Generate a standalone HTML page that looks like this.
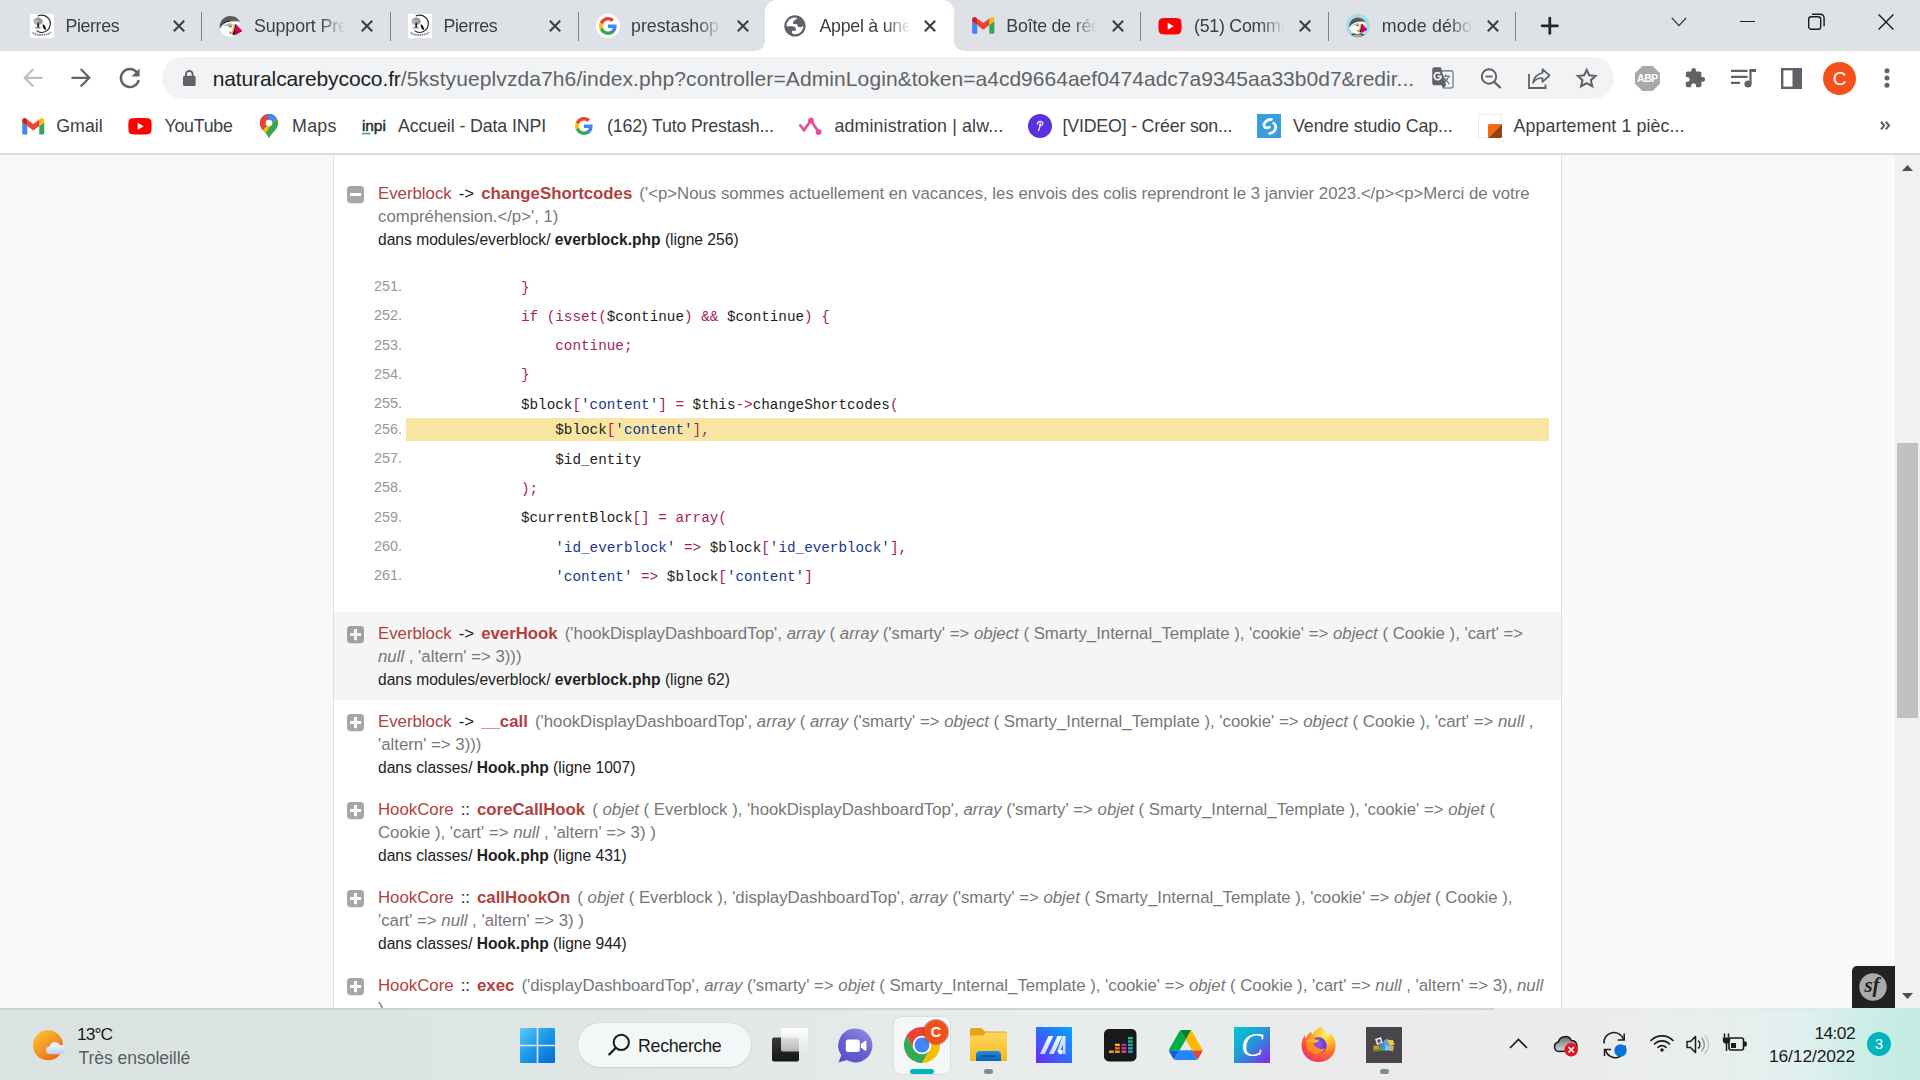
<!DOCTYPE html>
<html lang="fr">
<head>
<meta charset="utf-8">
<title>Appel à une fonction</title>
<style>
*{box-sizing:border-box;margin:0;padding:0}
html,body{width:1920px;height:1080px;overflow:hidden;background:#fff}
body{font-family:"Liberation Sans",sans-serif;position:relative;color:#222}
.abs{position:absolute}
svg{display:block;overflow:visible}

/* ---------- tab strip ---------- */
#tabstrip{position:absolute;left:0;top:0;width:1920px;height:51px;background:#dee1e6}
#atab{position:absolute;left:753px;top:0;width:213px;height:51px}
.tt_{position:absolute;top:12.500px;height:26px;line-height:26px;width:92px;overflow:hidden;white-space:nowrap;font-size:17.8px;color:#3c4043;letter-spacing:-.42px;-webkit-mask-image:linear-gradient(to right,#000 66px,transparent 91px);mask-image:linear-gradient(to right,#000 66px,transparent 91px)}
.sep{position:absolute;top:12px;width:1.200px;height:29px;background:#7f8286}
/* ---------- toolbar ---------- */
#toolbar{position:absolute;left:0;top:51px;width:1920px;height:52px;background:#fff}
#omni{position:absolute;left:162px;top:6px;width:1452px;height:42px;border-radius:21px;background:#f1f3f4}
#url{position:absolute;left:212.700px;top:13.300px;height:30px;line-height:30px;font-size:21px;white-space:nowrap;color:#5f6368;letter-spacing:.1px}
#url b{font-weight:normal;color:#202124;letter-spacing:-.11px}
#url i{font-style:normal;letter-spacing:.018px}
/* ---------- bookmarks ---------- */
#bookmarks{position:absolute;left:0;top:103px;width:1920px;height:50px;background:#fff}
#bmline{position:absolute;left:0;top:153px;width:1920px;height:2px;background:#d9dbde}
.bm{position:absolute;top:10px;height:26px;line-height:26px;font-size:17.8px;color:#3c4043;white-space:nowrap;letter-spacing:-.42px}

/* ---------- page ---------- */
#page{position:absolute;left:0;top:155px;width:1895px;height:853px;background:#f9f9f9;overflow:hidden;font-size:16.8px;line-height:23px}
#container{position:absolute;left:333px;top:-42px;width:1229px;height:1000px;background:#fff;border:1px solid #e0e0e0}
.tl{position:absolute;left:0;width:1227px;padding:10px 0 9px 0}
.tl.hov{background:#f5f5f5}
.tl .ic{position:absolute;left:13px;top:14px;width:17px;height:17.200px}
.th{padding-left:44px;padding-right:12px;white-space:nowrap}
.th .l{display:block;height:23px;line-height:23px}
.tc{color:#b0413e}
.tt{padding:0 2.4px}
.tm{color:#b0413e;font-weight:bold}
.ta{color:#777;padding-left:2.4px}
.ta em{font-style:italic}
.tf{color:#222;font-size:15.6px}
.tf b{font-weight:bold}
.code{position:absolute;left:72px;top:103px;width:1143px}
.code .li{position:relative;height:23.3px;margin-top:6px;line-height:23.3px;white-space:pre;font-family:"Liberation Mono",monospace;font-size:14.3px;color:#222}
.code .li:first-child{margin-top:0}
.code .li.sel{background:#f7e5a1;margin-top:2.4px}
.code .li i{position:absolute;left:-40px;width:36px;text-align:right;font-style:normal;font-family:"Liberation Sans",sans-serif;font-size:14.4px;color:#969896}
.code .li code{font:inherit;padding-left:12px;position:relative;top:1.600px}
.k{color:#a71d5d}.s{color:#183691}
#sfbtn{position:absolute;left:1852px;top:811px;width:43px;height:42px;background:#222;border-top-left-radius:5px}
#sfbtn svg{position:absolute;left:7px;top:7.200px;width:28px;height:28px}
/* ---------- scrollbar ---------- */
#scroll{position:absolute;left:1895px;top:155px;width:25px;height:853px;background:#f1f1f1}
#scroll .thumb{position:absolute;left:2px;top:288px;width:21px;height:275px;background:#c1c1c1}
#scroll svg{position:absolute;left:7px;width:11px;height:6px}

/* ---------- taskbar ---------- */
#taskbar{position:absolute;left:0;top:1008px;width:1920px;height:72px;background:linear-gradient(to right,#dae3e1 0,#dce5e3 20%,#e2e8e8 40%,#e8ecec 53%,#eaeceb 75%,#ebedec 85%,#e6efee 91%,#e0f0ef 94%,#cdeee6 97%,#c2ebe1 100%)}
#tbline{position:absolute;left:0;top:0;width:1920px;height:2px;background:linear-gradient(to right,#c8d2d0 0,#ccd4d3 40%,#d0d4d3 1494px,#e8ecec 1494px,#e9eceb 1700px,#d6ede8 1860px,#c9ebe3 1920px)}
#tbin{position:absolute;left:0;top:1px;width:1920px;height:71px}
#taskbar .t{position:absolute;white-space:nowrap;font-size:17.6px;line-height:22px;color:#1b1b1b;letter-spacing:-.35px}
</style>
</head>
<body>
<div id="tabstrip">
<svg id="atab" viewBox="0 0 213 51"><path fill="#fff" d="M2 51A10 10 0 0 0 12 41V12C12 5.400 17.400 0 24 0H189C195.600 0 201 5.400 201 12V41A10 10 0 0 0 211 51z"/></svg>
<svg class="abs" style="left:30px;top:14px;width:24px;height:24px" viewBox="0 0 24 24" ><rect width="24" height="24" fill="#fff"/><path d="M9 1.6A8.6 8.6 0 1 1 6.5 16.6" fill="none" stroke="#222" stroke-width="1.1"/><circle cx="8.4" cy="1.8" r=".7" fill="#111"/><ellipse cx="8.2" cy="7.3" rx="4.6" ry="3.7" fill="#9a9a9a"/><ellipse cx="6.6" cy="7.8" rx="2.6" ry="2.4" fill="#b5b5b5"/><path d="M7.5 8.5h1.4l.3 4.2 1 .8H6.1l1.1-.8z" fill="#222"/><path d="M4.2 13.4h7.2l-1.2 1.1H5.6z" fill="#777"/><path d="M12.6 10.2c1.8.4 3.3 2.6 3.6 5.3l-1.2.4c-1.6-1.3-2.7-3.5-2.4-5.7z" fill="#111"/><path d="M2.6 18.6c3 2.8 14.5 3 18.6-.4" fill="none" stroke="#777" stroke-width="1.3" stroke-dasharray="1.6 .7"/><path d="M3.5 20.5c4 1.6 12 1.6 16.5-.8" fill="none" stroke="#999" stroke-width=".9" stroke-dasharray="1.2 .9"/></svg>
<div class="tt_" style="left:65.4px;letter-spacing:-0.35px">Pierres</div>
<svg class="abs" style="left:172.6px;top:19.7px;width:12px;height:12px" viewBox="0 0 12 12" ><path d="M.8.800l10.400 10.400M11.200.800L.8 11.200" stroke="#3c4043" stroke-width="2.100" fill="none"/></svg>
<div class="sep" style="left:201.3px"></div>
<svg class="abs" style="left:219px;top:14px;width:24px;height:24px" viewBox="0 0 24 24" ><g transform="translate(11.4 12.4) scale(1.0)"><circle cx="-0.5" cy="0" r="10.4" fill="#fff"/><path d="M-10.6 2.6C-12 -6 -5 -10.6 0 -10.3c4.6.2 8.4 2.6 9.6 6.2C5 -7 -5 -7.6 -10.6 2.6z" fill="#595959"/><path d="M-8.2 -1.4C-5 -6.6 3 -7 7 -4.4 2 -6 -4 -5 -8.2 -1.4z" fill="#1f1f1f"/><path d="M-7.4 -.4C-3 -4 1 -3.6 2.6 -2.2L1 1 -3.5 -.6z" fill="#b8b8b8"/><path d="M-2.6 -.6L1.2 .2 .6 1z" fill="#222"/><path d="M5.6 -3.6a2.6 2.6 0 0 1 3.6 2.4L6 -1.2z" fill="#fff"/><path d="M3.4 -2.6C2.6 1 2.2 4 .4 7.4l1.4.6C3.6 4.4 4.4 1 4.6 -2.2z" fill="#f6b21b"/><path d="M4.6 -2.2C4.4 1 3.6 4.4 1.8 8l2.4 .8L6 -1z" fill="#1b1b1b"/><path d="M-1.8 4.6L1 6.6l-.6 1z" fill="#333"/><path d="M5.4 -2.6L12 4.6 4.2 8.8z" fill="#df0067"/><path d="M4.9 3L12 4.6 4.2 8.8z" fill="#c2005b"/></g></svg>
<div class="tt_" style="left:254px;letter-spacing:-0.1px">Support PrestaShop</div>
<svg class="abs" style="left:361px;top:19.7px;width:12px;height:12px" viewBox="0 0 12 12" ><path d="M.8.800l10.400 10.400M11.200.800L.8 11.200" stroke="#3c4043" stroke-width="2.100" fill="none"/></svg>
<div class="sep" style="left:390.3px"></div>
<svg class="abs" style="left:407.7px;top:14px;width:24px;height:24px" viewBox="0 0 24 24" ><rect width="24" height="24" fill="#fff"/><path d="M9 1.6A8.6 8.6 0 1 1 6.5 16.6" fill="none" stroke="#222" stroke-width="1.1"/><circle cx="8.4" cy="1.8" r=".7" fill="#111"/><ellipse cx="8.2" cy="7.3" rx="4.6" ry="3.7" fill="#9a9a9a"/><ellipse cx="6.6" cy="7.8" rx="2.6" ry="2.4" fill="#b5b5b5"/><path d="M7.5 8.5h1.4l.3 4.2 1 .8H6.1l1.1-.8z" fill="#222"/><path d="M4.2 13.4h7.2l-1.2 1.1H5.6z" fill="#777"/><path d="M12.6 10.2c1.8.4 3.3 2.6 3.6 5.3l-1.2.4c-1.6-1.3-2.7-3.5-2.4-5.7z" fill="#111"/><path d="M2.6 18.6c3 2.8 14.5 3 18.6-.4" fill="none" stroke="#777" stroke-width="1.3" stroke-dasharray="1.6 .7"/><path d="M3.5 20.5c4 1.6 12 1.6 16.5-.8" fill="none" stroke="#999" stroke-width=".9" stroke-dasharray="1.2 .9"/></svg>
<div class="tt_" style="left:443.5px;letter-spacing:-0.35px">Pierres</div>
<svg class="abs" style="left:549px;top:19.7px;width:12px;height:12px" viewBox="0 0 12 12" ><path d="M.8.800l10.400 10.400M11.200.800L.8 11.200" stroke="#3c4043" stroke-width="2.100" fill="none"/></svg>
<div class="sep" style="left:578.3px"></div>
<svg class="abs" style="left:596px;top:14px;width:24px;height:24px" viewBox="0 0 24 24" ><circle cx="12" cy="12" r="12" fill="#fff"/><g transform="translate(3 3) scale(.75)"><path fill="#4285F4" d="M23.49 12.27c0-.79-.07-1.54-.19-2.27H12v4.51h6.47c-.29 1.48-1.14 2.73-2.4 3.58v3h3.86c2.26-2.09 3.56-5.17 3.56-8.82z"/><path fill="#34A853" d="M12 24c3.24 0 5.95-1.08 7.93-2.91l-3.86-3c-1.08.72-2.45 1.16-4.07 1.16-3.13 0-5.78-2.11-6.73-4.96H1.29v3.09C3.26 21.3 7.31 24 12 24z"/><path fill="#FBBC05" d="M5.27 14.29c-.25-.72-.38-1.49-.38-2.29s.14-1.57.38-2.29V6.62H1.29C.47 8.24 0 10.06 0 12s.47 3.76 1.29 5.38l3.98-3.09z"/><path fill="#EA4335" d="M12 4.75c1.77 0 3.35.61 4.6 1.8l3.42-3.42C17.95 1.19 15.24 0 12 0 7.31 0 3.26 2.7 1.29 6.62l3.98 3.09c.95-2.85 3.6-4.96 6.73-4.96z"/></g></svg>
<div class="tt_" style="left:631px;letter-spacing:0px">prestashop - Recherche</div>
<svg class="abs" style="left:737px;top:19.7px;width:12px;height:12px" viewBox="0 0 12 12" ><path d="M.8.800l10.400 10.400M11.200.800L.8 11.200" stroke="#3c4043" stroke-width="2.100" fill="none"/></svg>
<svg class="abs" style="left:778px;top:9px;width:34px;height:34px" viewBox="0 0 34 34" ><clipPath id="gc"><circle cx="16.950" cy="16.920" r="9.800"/></clipPath><circle cx="16.950" cy="16.920" r="9.550" fill="none" stroke="#5f6368" stroke-width="2.200"/><g clip-path="url(#gc)"><path d="M18.900 7.500L18.700 10.200C16.600 10.900 15.100 12.100 15.100 13.600V14.900H18.300C18.900 14.900 19 15.300 19.100 15.800 19.400 17.300 20.500 18.300 22 18.300 23.300 18.300 24.400 17.700 25.200 16.800L29 17V5H18.900z" fill="#5f6368"/><path d="M5 17.200H14.200C16.300 17.200 17.900 18.300 17.900 20V21.800H15.200C14.300 21.800 13.900 22.300 13.900 23.200 13.900 24 14.300 24.600 15 25L15.500 29H5z" fill="#5f6368"/></g></svg>
<div class="tt_" style="left:819.4px;letter-spacing:-0.25px">Appel à une fonction</div>
<svg class="abs" style="left:924.2px;top:19.7px;width:12px;height:12px" viewBox="0 0 12 12" ><path d="M.8.800l10.400 10.400M11.200.800L.8 11.200" stroke="#3c4043" stroke-width="2.100" fill="none"/></svg>
<svg class="abs" style="left:972px;top:17.3px;width:22.5px;height:16.7px" viewBox="0 0 24 18" ><path fill="#4285f4" d="M1.64 18h3.82V8.73L0 4.64v11.72C0 17.27.73 18 1.64 18z"/><path fill="#34a853" d="M18.55 18h3.82c.9 0 1.63-.73 1.63-1.64V4.64l-5.45 4.09z"/><path fill="#fbbc04" d="M18.55 1.64v7.09L24 4.64V2.45C24 .43 21.69-.72 20.07.49z"/><path fill="#ea4335" d="M5.45 8.73V1.64L12 6.55l6.55-4.91v7.09L12 13.64z"/><path fill="#c5221f" d="M0 2.45v2.19l5.45 4.09V1.64L3.93.49C2.31-.72 0 .43 0 2.45z"/></svg>
<div class="tt_" style="left:1006.3px;letter-spacing:-0.2px">Boîte de réception</div>
<svg class="abs" style="left:1111.5px;top:19.7px;width:12px;height:12px" viewBox="0 0 12 12" ><path d="M.8.800l10.400 10.400M11.200.800L.8 11.200" stroke="#3c4043" stroke-width="2.100" fill="none"/></svg>
<div class="sep" style="left:1140.3px"></div>
<svg class="abs" style="left:1158px;top:17.7px;width:24px;height:16.4px" viewBox="0 0 24 17" ><path fill="#f00" d="M23.5 2.65A3.02 3.02 0 0 0 21.38.52C19.5 0 12 0 12 0S4.5 0 2.62.52A3.02 3.02 0 0 0 .5 2.65C0 4.54 0 8.5 0 8.5s0 3.96.5 5.85a3.02 3.02 0 0 0 2.12 2.13C4.5 17 12 17 12 17s7.5 0 9.38-.52a3.02 3.02 0 0 0 2.12-2.13c.5-1.89.5-5.85.5-5.85s0-3.960-.5-5.85z"/><path fill="#fff" d="M9.6 12.1V4.9l6.2 3.6z"/></svg>
<div class="tt_" style="left:1194px;letter-spacing:-0.25px">(51) Comment</div>
<svg class="abs" style="left:1299px;top:19.7px;width:12px;height:12px" viewBox="0 0 12 12" ><path d="M.8.800l10.400 10.400M11.200.800L.8 11.200" stroke="#3c4043" stroke-width="2.100" fill="none"/></svg>
<div class="sep" style="left:1328.3px"></div>
<svg class="abs" style="left:1346px;top:14px;width:24px;height:24px" viewBox="0 0 24 24" ><circle cx="12" cy="12" r="12" fill="#a6dcea"/><clipPath id="c8"><circle cx="12" cy="12" r="10.800"/></clipPath><g clip-path="url(#c8)"><ellipse cx="11.500" cy="22.500" rx="8" ry="3.600" fill="#3f3f3f"/><ellipse cx="11.500" cy="23.300" rx="6.200" ry="3" fill="#c4a77a"/><g transform="translate(11.8 11.7) scale(0.8)"><circle cx="-0.5" cy="0" r="10.4" fill="#fff"/><path d="M-10.6 2.6C-12 -6 -5 -10.6 0 -10.3c4.6.2 8.4 2.6 9.6 6.2C5 -7 -5 -7.6 -10.6 2.6z" fill="#595959"/><path d="M-8.2 -1.4C-5 -6.6 3 -7 7 -4.4 2 -6 -4 -5 -8.2 -1.4z" fill="#1f1f1f"/><path d="M-7.4 -.4C-3 -4 1 -3.6 2.6 -2.2L1 1 -3.5 -.6z" fill="#b8b8b8"/><path d="M-2.6 -.6L1.2 .2 .6 1z" fill="#222"/><path d="M5.6 -3.6a2.6 2.6 0 0 1 3.6 2.4L6 -1.2z" fill="#fff"/><path d="M3.4 -2.6C2.6 1 2.2 4 .4 7.4l1.4.6C3.6 4.4 4.4 1 4.6 -2.2z" fill="#f6b21b"/><path d="M4.6 -2.2C4.4 1 3.6 4.4 1.8 8l2.4 .8L6 -1z" fill="#1b1b1b"/><path d="M-1.8 4.6L1 6.6l-.6 1z" fill="#333"/><path d="M5.4 -2.6L12 4.6 4.2 8.8z" fill="#df0067"/><path d="M4.9 3L12 4.6 4.2 8.8z" fill="#c2005b"/></g></g></svg>
<div class="tt_" style="left:1381.8px;letter-spacing:0.15px">mode débogage</div>
<svg class="abs" style="left:1487px;top:19.7px;width:12px;height:12px" viewBox="0 0 12 12" ><path d="M.8.800l10.400 10.400M11.200.800L.8 11.200" stroke="#3c4043" stroke-width="2.100" fill="none"/></svg>
<div class="sep" style="left:1515.3px"></div>
<svg class="abs" style="left:1540.7px;top:16.7px;width:17.6px;height:17.6px" viewBox="0 0 19 19" ><path d="M9.500 1.200v16.600M1.200 9.500h16.600" stroke="#24272a" stroke-width="3" stroke-linecap="round"/></svg>
<svg class="abs" style="left:1671px;top:17px;width:16px;height:10px" viewBox="0 0 16 10" ><path d="M.8.800L8 8.600 15.200.800" stroke="#2a2a2a" stroke-width="1.150" fill="none"/></svg>
<div class="abs" style="left:1740px;top:20.800px;width:15px;height:1.400px;background:#1c1c1c"></div>
<svg class="abs" style="left:1808px;top:13px;width:17px;height:17px" viewBox="0 0 17 17" ><rect x=".7" y="3.700" width="12" height="12.600" rx="2.600" fill="none" stroke="#1c1c1c" stroke-width="1.400"/><path d="M4 1.200h8.500a3.600 3.600 0 0 1 3.600 3.600v8.400" fill="none" stroke="#1c1c1c" stroke-width="1.400"/></svg>
<svg class="abs" style="left:1878px;top:14px;width:16px;height:16px" viewBox="0 0 16 16" ><path d="M.6.600l14.800 14.800M15.400.600L.6 15.400" stroke="#1c1c1c" stroke-width="1.400"/></svg>
</div>
<div id="toolbar"><div id="omni"></div>
<svg class="abs" style="left:23px;top:16.700000000000003px;width:20px;height:19.6px" viewBox="0 0 20 19.600" ><path d="M19.500 9.800H2.500M10.300 1.100L1.700 9.800 10.300 18.500" fill="none" stroke="#bbbdc1" stroke-width="2.200"/></svg>
<svg class="abs" style="left:71px;top:16.700000000000003px;width:20px;height:19.6px" viewBox="0 0 20 19.600" ><path d="M.5 9.800H17.500M9.700 1.100L18.300 9.800 9.700 18.500" fill="none" stroke="#5f6368" stroke-width="2.200"/></svg>
<svg class="abs" style="left:118.7px;top:15.700000000000003px;width:21.8px;height:21.8px" viewBox="0 0 21 21" ><path d="M17.300 5.200A8.700 8.700 0 1 0 19 12.500" fill="none" stroke="#5f6368" stroke-width="2.300"/><path d="M19.800 1.500v7.700h-7.700z" fill="#5f6368"/></svg>
<svg class="abs" style="left:182.7px;top:19.299999999999997px;width:12.6px;height:16.5px" viewBox="0 0 13 17" ><rect x="0" y="6" width="13" height="10.500" rx="1.600" fill="#5f6368"/><path d="M3 6.500V4.500a3.500 3.500 0 0 1 7 0v2" fill="none" stroke="#5f6368" stroke-width="1.900"/></svg>
<svg class="abs" style="left:1430.3px;top:14.200000000000003px;width:25.8px;height:25.6px" viewBox="0 0 24 24" ><path fill="#5f6368" d="M20 5h-9.120L10 2H4c-1.100 0-2 .9-2 2v13c0 1.100.9 2 2 2h7l1 3h8c1.100 0 2-.9 2-2V7c0-1.100-.9-2-2-2zM7.170 14.590c-2.250 0-4.090-1.830-4.090-4.090s1.830-4.090 4.090-4.090c1.040 0 1.990.370 2.740 1.070l.070.060-1.230 1.180-.060-.050c-.290-.270-.780-.590-1.520-.590-1.310 0-2.380 1.090-2.380 2.420s1.070 2.420 2.380 2.420c1.370 0 1.960-.870 2.120-1.460H7.080V9.910h3.950l.010.070c.040.210.050.4.050.610 0 2.350-1.610 4-3.920 4zm6.030-1.710c.330.600.740 1.180 1.190 1.700l-.540.530-.650-2.230zm.77-.760h-.990l-.310-1.040h3.990s-.340 1.310-1.560 2.740c-.520-.620-.890-1.230-1.130-1.700zM21 20c0 .550-.450 1-1 1h-7l2-2-.810-2.770.920-.920L17.790 18l.730-.730-2.710-2.680c.9-1.030 1.600-2.250 1.920-3.510H19v-1.040h-3.640V9h-1.040v1.040h-1.960L11.180 6H20c.550 0 1 .450 1 1v13z"/></svg>
<svg class="abs" style="left:1480px;top:16.5px;width:22px;height:21px" viewBox="0 0 22 21" ><circle cx="9" cy="8.500" r="7.200" fill="none" stroke="#5f6368" stroke-width="2"/><path d="M14.200 13.800L20.600 20" stroke="#5f6368" stroke-width="2.300"/><path d="M5.500 8.500h7" stroke="#5f6368" stroke-width="1.800"/></svg>
<svg class="abs" style="left:1528px;top:16.5px;width:23px;height:21px" viewBox="0 0 23 21" ><path d="M1 6v14h16.500v-3.500" fill="none" stroke="#5f6368" stroke-width="1.800"/><path d="M14.500 1.200l7 6.300-7 6.300V10c-4.500 0-7.500 1.500-9.500 4.800C6 9.500 9 6 14.500 5z" fill="none" stroke="#5f6368" stroke-width="1.700" stroke-linejoin="round"/></svg>
<svg class="abs" style="left:1576.3px;top:16.400000000000006px;width:21.4px;height:20.4px" viewBox="0 0 22 21" ><path d="M11 2.900l2.600 5.600 6.500.7-4.800 4.400 1.400 6.200L11 16.600 5.300 19.800l1.400-6.200L1.900 9.200l6.500-.7z" fill="none" stroke="#5f6368" stroke-width="2.100" stroke-linejoin="miter"/></svg>
<svg class="abs" style="left:1634.5px;top:14.5px;width:25px;height:25px" viewBox="0 0 25 25" ><path d="M7.300 0h10.400L25 7.300v10.400L17.700 25H7.300L0 17.700V7.300z" fill="#a9a9a9"/><text x="12.500" y="16.400" text-anchor="middle" font-family="Liberation Sans,sans-serif" font-weight="bold" font-size="10.500" letter-spacing="-.4" fill="#fff">ABP</text></svg>
<svg class="abs" style="left:1684px;top:16px;width:22px;height:22px" viewBox="0 0 24 24" ><path fill="#5f6368" d="M20.500 11H19V7c0-1.100-.9-2-2-2h-4V3.500a2.500 2.500 0 0 0-5 0V5H4c-1.100 0-1.990.900-1.990 2v3.800H3.500c1.490 0 2.700 1.210 2.700 2.700s-1.210 2.700-2.700 2.700H2V20c0 1.100.9 2 2 2h3.800v-1.500c0-1.490 1.210-2.700 2.700-2.700s2.700 1.210 2.700 2.700V22H17c1.100 0 2-.9 2-2v-4h1.500a2.500 2.500 0 0 0 0-5z"/></svg>
<svg class="abs" style="left:1730.5px;top:17.5px;width:25px;height:19px" viewBox="0 0 25 19" ><path d="M0 1.800h16.500M0 7.800h16.500M0 13.800h9" stroke="#5f6368" stroke-width="2.200"/><path d="M19.500 1v13.500" stroke="#5f6368" stroke-width="2.200"/><path d="M18.400 0H25v3h-6.600z" fill="#5f6368"/><circle cx="17" cy="15" r="3.600" fill="#5f6368"/></svg>
<svg class="abs" style="left:1780.5px;top:16.5px;width:21px;height:21px" viewBox="0 0 21 21" ><rect x="1.200" y="1.200" width="18.600" height="18.600" fill="none" stroke="#5f6368" stroke-width="2.400"/><rect x="11.500" y="1" width="9" height="19" fill="#5f6368"/></svg>
<div class="abs" style="left:1823px;top:10.500px;width:33px;height:33px;border-radius:50%;background:#f4511e;color:#fff;font-size:19px;line-height:33px;text-align:center">C</div>
<svg class="abs" style="left:1884px;top:17px;width:6px;height:20px" viewBox="0 0 6 20" ><circle cx="3" cy="2.700" r="2.500" fill="#5f6368"/><circle cx="3" cy="10" r="2.500" fill="#5f6368"/><circle cx="3" cy="17.300" r="2.500" fill="#5f6368"/></svg>
<div id="url"><b>naturalcarebycoco.fr</b>/5kstyueplvzda7h6/index.php?controller=AdminLogin<i>&amp;token=a4cd9664aef0474adc7a9345aa33b0d7&amp;redir...</i></div>
</div>
<div id="bookmarks">
<svg class="abs" style="left:22px;top:15px;width:22.5px;height:16.5px" viewBox="0 0 24 18" ><path fill="#4285f4" d="M1.64 18h3.82V8.73L0 4.64v11.72C0 17.27.73 18 1.64 18z"/><path fill="#34a853" d="M18.55 18h3.82c.9 0 1.63-.73 1.63-1.64V4.64l-5.45 4.09z"/><path fill="#fbbc04" d="M18.55 1.64v7.09L24 4.64V2.45C24 .43 21.69-.72 20.07.49z"/><path fill="#ea4335" d="M5.45 8.73V1.64L12 6.55l6.55-4.91v7.09L12 13.64z"/><path fill="#c5221f" d="M0 2.45v2.19l5.45 4.09V1.64L3.93.49C2.31-.72 0 .43 0 2.45z"/></svg>
<div class="bm" style="left:56.3px;letter-spacing:-0.02px">Gmail</div>
<svg class="abs" style="left:128px;top:15px;width:24px;height:16.5px" viewBox="0 0 24 17" ><path fill="#f00" d="M23.5 2.65A3.02 3.02 0 0 0 21.38.52C19.5 0 12 0 12 0S4.5 0 2.62.52A3.02 3.02 0 0 0 .5 2.65C0 4.54 0 8.5 0 8.5s0 3.96.5 5.85a3.02 3.02 0 0 0 2.12 2.13C4.5 17 12 17 12 17s7.5 0 9.38-.52a3.02 3.02 0 0 0 2.12-2.13c.5-1.89.5-5.85.5-5.85s0-3.960-.5-5.85z"/><path fill="#fff" d="M9.6 12.1V4.9l6.2 3.6z"/></svg>
<div class="bm" style="left:164.5px;letter-spacing:-0.25px">YouTube</div>
<svg class="abs" style="left:260px;top:11px;width:18px;height:24px" viewBox="0 0 18 24" ><clipPath id="mp"><path d="M9 0C4 0 0 4 0 9c0 2.400.9 4.400 2.200 6.200C4.600 18.500 7.600 20.500 9 24c1.400-3.500 4.400-5.500 6.800-8.800C17.100 13.400 18 11.400 18 9c0-5-4-9-9-9z"/></clipPath><g clip-path="url(#mp)"><rect width="18" height="24" fill="#34a853"/><path d="M0 0h18L0 18z" fill="#1a73e8"/><path d="M0 0h9v9L0 18z" fill="#ea4335"/><path d="M0 9l9 0 0 0L0 20z" fill="#ea4335"/><path d="M18 0v11L7 24H0v-6z" fill="none"/><path d="M0 12.5L12.5 0H18v3L2.500 18.500z" fill="none"/><path d="M2 17L16.500 2.500l1.500 5L5 21z" fill="#fbbc04"/><path d="M6 0h12v3L12 9 9 6z" fill="#4285f4"/><path d="M11 10.500L18 3.500V14L9 24H8L6 19z" fill="#34a853"/></g><circle cx="9" cy="9" r="3.300" fill="#fff"/></svg>
<div class="bm" style="left:292px;letter-spacing:0.33px">Maps</div>
<svg class="abs" style="left:361.5px;top:14.5px;width:26px;height:17px" viewBox="0 0 26 17" ><text x="0" y="12.500" font-family="Liberation Sans,sans-serif" font-size="15.500" letter-spacing="-.1" fill="#1d2a3a" stroke="#1d2a3a" stroke-width=".45">inpi</text><rect x="0" y="14.800" width="8.500" height="1.500" fill="#2a9d9a"/></svg>
<div class="bm" style="left:398px;letter-spacing:-0.11px">Accueil - Data INPI</div>
<svg class="abs" style="left:575px;top:13.5px;width:18px;height:18px" viewBox="0 0 24 24" ><path fill="#4285F4" d="M23.49 12.27c0-.79-.07-1.54-.19-2.27H12v4.51h6.47c-.29 1.48-1.14 2.73-2.4 3.58v3h3.86c2.26-2.09 3.56-5.17 3.56-8.82z"/><path fill="#34A853" d="M12 24c3.24 0 5.95-1.08 7.93-2.91l-3.86-3c-1.08.72-2.45 1.16-4.07 1.16-3.13 0-5.78-2.11-6.73-4.96H1.29v3.09C3.26 21.3 7.31 24 12 24z"/><path fill="#FBBC05" d="M5.27 14.29c-.25-.72-.38-1.49-.38-2.29s.14-1.57.38-2.29V6.62H1.29C.47 8.24 0 10.06 0 12s.47 3.76 1.29 5.38l3.98-3.09z"/><path fill="#EA4335" d="M12 4.75c1.77 0 3.35.61 4.6 1.8l3.42-3.42C17.95 1.19 15.24 0 12 0 7.31 0 3.26 2.7 1.29 6.62l3.98 3.09c.95-2.85 3.6-4.96 6.73-4.96z"/></svg>
<div class="bm" style="left:607px;letter-spacing:-0.19px">(162) Tuto Prestash...</div>
<svg class="abs" style="left:798.5px;top:11px;width:24px;height:24px" viewBox="0 0 24 24" ><path d="M1.200 11.500L5 16 12 6.500 19.500 18" fill="none" stroke="#e84d9c" stroke-width="2.700" stroke-linejoin="round" stroke-linecap="round"/><circle cx="12" cy="6.400" r="2.900" fill="#e84d9c"/><circle cx="19.600" cy="18" r="2.900" fill="#e84d9c"/><circle cx="5" cy="16" r="1.600" fill="#e84d9c"/></svg>
<div class="bm" style="left:834.4px;letter-spacing:0.145px">administration | alw...</div>
<svg class="abs" style="left:1028px;top:11px;width:24px;height:24px" viewBox="0 0 24 24" ><circle cx="12" cy="12" r="12" fill="#5a31e0"/><path d="M10.500 16.500c1.200-2.500 1.800-5 1.800-7.500M9.400 10c.4-1.700 2-2.700 3.600-2.500 1.700.2 2.400 1.800 1.500 3-.7.900-1.900 1.200-3 .9" fill="none" stroke="#fff" stroke-width="1.200" stroke-linecap="round"/></svg>
<div class="bm" style="left:1062.5px;letter-spacing:-0.19px">[VIDEO] - Créer son...</div>
<svg class="abs" style="left:1257px;top:11px;width:24px;height:24px" viewBox="0 0 24 24" ><rect width="24" height="24" fill="#3a9ddc"/><path d="M14.600 5.400C10.500 4.800 5.800 9 7.300 12.300 8.300 14.300 10.600 14.400 12.300 13.200" fill="none" stroke="#fff" stroke-width="2.700" stroke-linecap="round"/><path d="M16.600 9.200C19.300 10.800 19.600 14.600 17 17.200 15.600 18.600 14 19.300 12.600 19.300" fill="none" stroke="#fff" stroke-width="2.700" stroke-linecap="round"/></svg>
<div class="bm" style="left:1293px;letter-spacing:-0.07px">Vendre studio Cap...</div>
<svg class="abs" style="left:1478px;top:11px;width:24px;height:24px" viewBox="0 0 24 24" ><rect x=".5" y=".5" width="23" height="23" fill="#fff" stroke="#ececec"/><path d="M10 11.500a1.500 1.500 0 0 1 1.500-1.500H24L10 24z" fill="#f96a0e"/><path d="M24 10v12.500a1.500 1.500 0 0 1-1.500 1.500H10z" fill="#96400c"/></svg>
<div class="bm" style="left:1513.5px;letter-spacing:0.1px">Appartement 1 pièc...</div>
<svg class="abs" style="left:1880.4px;top:18px;width:10px;height:9.2px" viewBox="0 0 10 9.200" ><path d="M1 .8L4.200 4.600 1 8.400M5.800 .8L9 4.600 5.800 8.400" fill="none" stroke="#5f6368" stroke-width="2.100"/></svg>
</div><div id="bmline"></div>
<div id="page"><div id="container">
<div class="tl" style="top:58px;height:440px"><svg class="ic" viewBox="0 0 17 17" preserveAspectRatio="none" opacity=".4"><path fill="#222" d="M3.600 0h9.800a3.600 3.600 0 0 1 3.600 3.600v9.800a3.600 3.600 0 0 1-3.600 3.600H3.600a3.600 3.600 0 0 1-3.600-3.600V3.600a3.600 3.600 0 0 1 3.600-3.600zm-.6 7v3h11V7z"/></svg><div class="th"><span class="l"><span class="tc">Everblock</span> <span class="tt">-&gt;</span> <span class="tm">changeShortcodes</span> <span class="ta">('&lt;p&gt;Nous sommes actuellement en vacances, les envois des colis reprendront le 3 janvier 2023.&lt;/p&gt;&lt;p&gt;Merci de votre</span></span><span class="l"><span class="ta" style="padding:0">compréhension.&lt;/p&gt;', 1)</span></span><span class="l"><span class="tf">dans modules/everblock/ <b>everblock.php</b> (ligne 256)</span></span></div><div class="code"><div class="li"><i>251.</i><code>            <span class="k">}</span></code></div><div class="li"><i>252.</i><code>            <span class="k">if (isset(</span>$continue<span class="k">) &amp;&amp; </span>$continue<span class="k">) {</span></code></div><div class="li"><i>253.</i><code>                <span class="k">continue;</span></code></div><div class="li"><i>254.</i><code>            <span class="k">}</span></code></div><div class="li"><i>255.</i><code>            $block<span class="k">[</span><span class="s">'content'</span><span class="k">] = </span>$this<span class="k">-&gt;</span>changeShortcodes<span class="k">(</span></code></div><div class="li sel"><i>256.</i><code>                $block<span class="k">[</span><span class="s">'content'</span><span class="k">],</span></code></div><div class="li"><i>257.</i><code>                $id_entity</code></div><div class="li"><i>258.</i><code>            <span class="k">);</span></code></div><div class="li"><i>259.</i><code>            $currentBlock<span class="k">[] = array(</span></code></div><div class="li"><i>260.</i><code>                <span class="s">'id_everblock'</span><span class="k"> =&gt; </span>$block<span class="k">[</span><span class="s">'id_everblock'</span><span class="k">],</span></code></div><div class="li"><i>261.</i><code>                <span class="s">'content'</span><span class="k"> =&gt; </span>$block<span class="k">[</span><span class="s">'content'</span><span class="k">]</span></code></div></div></div>
<div class="tl hov" style="top:498px;height:88px"><svg class="ic" viewBox="0 0 17 17" preserveAspectRatio="none" opacity=".4"><path fill="#222" d="M3.600 0h9.800a3.600 3.600 0 0 1 3.600 3.600v9.800a3.600 3.600 0 0 1-3.600 3.600H3.600a3.600 3.600 0 0 1-3.600-3.600V3.600a3.600 3.600 0 0 1 3.600-3.600zm3.400 3v4H3v3h4v4h3v-4h4V7h-4V3z"/></svg><div class="th"><span class="l"><span class="tc">Everblock</span> <span class="tt">-&gt;</span> <span class="tm">everHook</span> <span class="ta">('hookDisplayDashboardTop', <em>array</em> ( <em>array</em> ('smarty' =&gt; <em>object</em> ( Smarty_Internal_Template ), 'cookie' =&gt; <em>object</em> ( Cookie ), 'cart' =&gt;</span></span><span class="l"><span class="ta" style="padding:0"><em>null</em> , 'altern' =&gt; 3)))</span></span><span class="l"><span class="tf">dans modules/everblock/ <b>everblock.php</b> (ligne 62)</span></span></div></div>
<div class="tl" style="top:586px;height:88px"><svg class="ic" viewBox="0 0 17 17" preserveAspectRatio="none" opacity=".4"><path fill="#222" d="M3.600 0h9.800a3.600 3.600 0 0 1 3.600 3.600v9.800a3.600 3.600 0 0 1-3.600 3.600H3.600a3.600 3.600 0 0 1-3.600-3.600V3.600a3.600 3.600 0 0 1 3.600-3.600zm3.400 3v4H3v3h4v4h3v-4h4V7h-4V3z"/></svg><div class="th"><span class="l"><span class="tc">Everblock</span> <span class="tt">-&gt;</span> <span class="tm">__call</span> <span class="ta">('hookDisplayDashboardTop', <em>array</em> ( <em>array</em> ('smarty' =&gt; <em>object</em> ( Smarty_Internal_Template ), 'cookie' =&gt; <em>object</em> ( Cookie ), 'cart' =&gt; <em>null</em> ,</span></span><span class="l"><span class="ta" style="padding:0">'altern' =&gt; 3)))</span></span><span class="l"><span class="tf">dans classes/ <b>Hook.php</b> (ligne 1007)</span></span></div></div>
<div class="tl" style="top:674px;height:88px"><svg class="ic" viewBox="0 0 17 17" preserveAspectRatio="none" opacity=".4"><path fill="#222" d="M3.600 0h9.800a3.600 3.600 0 0 1 3.600 3.600v9.800a3.600 3.600 0 0 1-3.600 3.600H3.600a3.600 3.600 0 0 1-3.600-3.600V3.600a3.600 3.600 0 0 1 3.600-3.600zm3.400 3v4H3v3h4v4h3v-4h4V7h-4V3z"/></svg><div class="th"><span class="l"><span class="tc">HookCore</span> <span class="tt">::</span> <span class="tm">coreCallHook</span> <span class="ta">( <em>objet</em> ( Everblock ), 'hookDisplayDashboardTop', <em>array</em> ('smarty' =&gt; <em>objet</em> ( Smarty_Internal_Template ), 'cookie' =&gt; <em>objet</em> (</span></span><span class="l"><span class="ta" style="padding:0">Cookie ), 'cart' =&gt; <em>null</em> , 'altern' =&gt; 3) )</span></span><span class="l"><span class="tf">dans classes/ <b>Hook.php</b> (ligne 431)</span></span></div></div>
<div class="tl" style="top:762px;height:88px"><svg class="ic" viewBox="0 0 17 17" preserveAspectRatio="none" opacity=".4"><path fill="#222" d="M3.600 0h9.800a3.600 3.600 0 0 1 3.600 3.600v9.800a3.600 3.600 0 0 1-3.600 3.600H3.600a3.600 3.600 0 0 1-3.600-3.600V3.600a3.600 3.600 0 0 1 3.600-3.600zm3.400 3v4H3v3h4v4h3v-4h4V7h-4V3z"/></svg><div class="th"><span class="l"><span class="tc">HookCore</span> <span class="tt">::</span> <span class="tm">callHookOn</span> <span class="ta">( <em>objet</em> ( Everblock ), 'displayDashboardTop', <em>array</em> ('smarty' =&gt; <em>objet</em> ( Smarty_Internal_Template ), 'cookie' =&gt; <em>objet</em> ( Cookie ),</span></span><span class="l"><span class="ta" style="padding:0">'cart' =&gt; <em>null</em> , 'altern' =&gt; 3) )</span></span><span class="l"><span class="tf">dans classes/ <b>Hook.php</b> (ligne 944)</span></span></div></div>
<div class="tl" style="top:850px;height:88px"><svg class="ic" viewBox="0 0 17 17" preserveAspectRatio="none" opacity=".4"><path fill="#222" d="M3.600 0h9.800a3.600 3.600 0 0 1 3.600 3.600v9.800a3.600 3.600 0 0 1-3.600 3.600H3.600a3.600 3.600 0 0 1-3.600-3.600V3.600a3.600 3.600 0 0 1 3.600-3.600zm3.400 3v4H3v3h4v4h3v-4h4V7h-4V3z"/></svg><div class="th"><span class="l"><span class="tc">HookCore</span> <span class="tt">::</span> <span class="tm">exec</span> <span class="ta">('displayDashboardTop', <em>array</em> ('smarty' =&gt; <em>objet</em> ( Smarty_Internal_Template ), 'cookie' =&gt; <em>objet</em> ( Cookie ), 'cart' =&gt; <em>null</em> , 'altern' =&gt; 3), <em>null</em></span></span><span class="l"><span class="ta" style="padding:0">)</span></span></div></div>
</div><div id="sfbtn"><svg viewBox="0 0 28 28"><circle cx="14" cy="14" r="13.7" fill="#aaa"/><text x="13" y="19.200" text-anchor="middle" font-family="Liberation Serif,serif" font-style="italic" font-weight="bold" font-size="21" fill="#222">sf</text></svg></div></div>
<div id="scroll"><svg style="top:10px" viewBox="0 0 11 6"><path d="M0 6L5.5 0L11 6z" fill="#505050"/></svg><div class="thumb"></div><svg style="top:838px" viewBox="0 0 11 6"><path d="M0 0L5.5 6L11 0z" fill="#505050"/></svg></div>
<div id="taskbar"><div id="tbline"></div><div id="tbin">
<svg class="abs" style="left:33px;top:20.5px;width:34px;height:31px" viewBox="0 0 34 31" ><defs><linearGradient id="sun" x1="0.150" y1="0.100" x2="0.800" y2="0.950"><stop offset="0" stop-color="#f7bd2e"/><stop offset=".55" stop-color="#f39122"/><stop offset="1" stop-color="#ee6410"/></linearGradient><linearGradient id="cld" x1="0" y1="0" x2="0" y2="1"><stop offset="0" stop-color="#fff"/><stop offset="1" stop-color="#b9cdf2"/></linearGradient></defs><circle cx="15" cy="15.300" r="15" fill="url(#sun)"/><path d="M16 24.200a3.900 3.900 0 0 1 .6-7.700 5.600 5.600 0 0 1 10.400-1.300 4.600 4.600 0 0 1 2.300 9z" fill="url(#cld)"/></svg>
<div class="t" style="left:77px;top:14px;font-size:17.400px;letter-spacing:-.9px">13°C</div>
<div class="t" style="left:78.500px;top:38px;color:#5c5f5f;letter-spacing:-.07px">Très ensoleillé</div>
<svg class="abs" style="left:520px;top:19px;width:35px;height:35px" viewBox="0 0 35 35" ><defs><linearGradient id="win" x1="0" y1="0" x2="1" y2="1"><stop offset="0" stop-color="#55cbfa"/><stop offset=".5" stop-color="#1d97e8"/><stop offset="1" stop-color="#056bd0"/></linearGradient></defs><path fill="url(#win)" d="M1.500 0H16.700V16.700H0V1.500A1.500 1.500 0 0 1 1.500 0zM18.300 0H33.500A1.500 1.500 0 0 1 35 1.500V16.700H18.300zM0 18.300H16.700V35H1.500A1.500 1.500 0 0 1 0 33.500zM18.300 18.300H35V33.500A1.500 1.500 0 0 1 33.500 35H18.300z"/></svg>
<div class="abs" style="left:578px;top:14px;width:173px;height:44px;border-radius:22px;background:#f4f7f7;box-shadow:0 0 0 1px rgba(0,0,0,.035),0 1px 2px rgba(0,0,0,.06)"></div>
<svg class="abs" style="left:608px;top:23.6px;width:23px;height:23px" viewBox="0 0 23 23" ><circle cx="13.300" cy="9.300" r="7.600" fill="none" stroke="#1b1b1b" stroke-width="2"/><path d="M7.900 14.800L1.300 21.400" stroke="#1b1b1b" stroke-width="2.200" stroke-linecap="round"/></svg>
<div class="t" style="left:638px;top:25.500px;font-size:17.800px;letter-spacing:-.29px">Recherche</div>
<svg class="abs" style="left:772px;top:19px;width:36px;height:34px" viewBox="0 0 36 34" ><defs><linearGradient id="tv1" x1="0" y1="0" x2="0" y2="1"><stop offset="0" stop-color="#3a3a3a"/><stop offset="1" stop-color="#151515"/></linearGradient><linearGradient id="tv2" x1="0" y1="0" x2="0" y2="1"><stop offset="0" stop-color="#fff" stop-opacity=".95"/><stop offset="1" stop-color="#e8e8e8" stop-opacity=".75"/></linearGradient></defs><rect x="0" y="9.500" width="27" height="24" rx="2" fill="url(#tv1)"/><rect x="9" y="0" width="27" height="23.500" rx="2" fill="url(#tv2)"/></svg>
<svg class="abs" style="left:837px;top:18.5px;width:36px;height:36px" viewBox="0 0 36 36" ><defs><linearGradient id="ch" x1=".8" y1="0" x2=".2" y2="1"><stop offset="0" stop-color="#8b8fe0"/><stop offset=".5" stop-color="#6b62cf"/><stop offset="1" stop-color="#5550c4"/></linearGradient></defs><path d="M18.500 .5a17 17 0 1 1-8.800 31.600L1.500 34.500l2.800-7.300A17 17 0 0 1 18.500 .5z" fill="url(#ch)"/><rect x="8.800" y="11.500" width="14" height="12.500" rx="2.500" fill="#fff"/><path d="M23.800 16l4.400-3.200a.8.800 0 0 1 1.200.7v8.500a.8.800 0 0 1-1.200.7L23.800 19.500z" fill="#fff"/></svg>
<div class="abs" style="left:894px;top:8px;width:56px;height:57px;border-radius:7px;background:rgba(255,255,255,.6);box-shadow:0 0 0 1px rgba(0,0,0,.05)"></div>
<svg class="abs" style="left:904px;top:18px;width:36px;height:36px" viewBox="2 2 44 44" ><path d="M4.950 13A22 22 0 0 1 43.050 13L24 13A11 11 0 0 0 14.470 29.500z" fill="#ea4335"/><path d="M43.050 13A22 22 0 0 1 24 46L33.530 29.500A11 11 0 0 0 24 13z" fill="#fbbc04"/><path d="M24 46A22 22 0 0 1 4.950 13L14.470 29.500A11 11 0 0 0 33.530 29.500z" fill="#34a853"/><circle cx="24" cy="24" r="11.300" fill="#fff"/><circle cx="24" cy="24" r="9.200" fill="#4285f4"/></svg>
<div class="abs" style="left:924px;top:11px;width:24px;height:24px;border-radius:50%;background:#f1501c;box-shadow:0 0 0 1px rgba(120,60,40,.45);color:#fff;font-size:14.500px;font-weight:bold;line-height:24px;text-align:center">C</div>
<div class="abs" style="left:910px;top:60px;width:24px;height:5px;border-radius:2.500px;background:#00b4c0"></div>
<svg class="abs" style="left:970px;top:19px;width:37px;height:34px" viewBox="0 0 37 34" ><defs><linearGradient id="fo" x1="0" y1="0" x2="0" y2="1"><stop offset="0" stop-color="#ffd75e"/><stop offset="1" stop-color="#f9b71a"/></linearGradient><linearGradient id="fb" x1="0" y1="0" x2="0" y2="1"><stop offset="0" stop-color="#1b8fe0"/><stop offset="1" stop-color="#0a63b8"/></linearGradient></defs><path d="M0 2a2 2 0 0 1 2-2h9.500l3.500 3.500H35a2 2 0 0 1 2 2V8H0z" fill="#e6a313"/><path d="M0 7.500L13 7.500 16 4.500H35a2 2 0 0 1 2 2V33H0z" fill="url(#fo)"/><path d="M6 33V27a4 4 0 0 1 4-4h17a4 4 0 0 1 4 4v6z" fill="url(#fb)"/><rect x="11" y="27" width="15" height="2" rx="1" fill="#0b4f96"/></svg>
<div class="abs" style="left:984px;top:60px;width:9px;height:5px;border-radius:2.500px;background:#858a8b"></div>
<svg class="abs" style="left:1036px;top:18px;width:36px;height:36px" viewBox="0 0 36 36" ><defs><linearGradient id="ma" x1="1" y1="0" x2="0" y2="1"><stop offset="0" stop-color="#04a6ff"/><stop offset=".5" stop-color="#2f6bff"/><stop offset="1" stop-color="#6f27f5"/></linearGradient><linearGradient id="maw" x1="0" y1="0" x2="0" y2="1"><stop offset="0" stop-color="#fff"/><stop offset="1" stop-color="#cfd4ff"/></linearGradient></defs><rect width="36" height="36" fill="url(#ma)"/><path d="M12.500 9h4.800L8.800 27H4zM21.500 9h4.800L17.800 27H13z" fill="url(#maw)"/><path d="M26.800 9h2.700v18h-2.500V18l-3.500 7.500-2.500-1z" fill="url(#maw)" opacity=".9"/><circle cx="24.500" cy="25" r="2.300" fill="#fff"/></svg>
<svg class="abs" style="left:1103.5px;top:19.5px;width:32.5px;height:32.5px" viewBox="0 0 32.500 32.500" ><rect width="32.500" height="32.500" rx="5" fill="#191919"/><rect x="5" y="21.5" width="4.800" height="2.400" fill="#f7a21b"/><rect x="11" y="21.5" width="4.800" height="2.400" fill="#f7a21b"/><rect x="11" y="18.1" width="4.800" height="2.400" fill="#f0682a"/><rect x="11" y="14.7" width="4.800" height="2.400" fill="#f4b61f"/><rect x="17.5" y="21.5" width="4.800" height="2.400" fill="#e8407a"/><rect x="17.5" y="18.1" width="4.800" height="2.400" fill="#c9378f"/><rect x="17.5" y="14.7" width="4.800" height="2.400" fill="#a03a9b"/><rect x="24" y="21.5" width="4.800" height="2.400" fill="#2d8fe0"/><rect x="24" y="18.1" width="4.800" height="2.400" fill="#1da2c8"/><rect x="24" y="14.7" width="4.800" height="2.400" fill="#16b08f"/><rect x="24" y="11.3" width="4.800" height="2.400" fill="#10b87a"/><rect x="24" y="7.9" width="4.800" height="2.400" fill="#22c070"/></svg>
<svg class="abs" style="left:1169px;top:20.5px;width:33.5px;height:30px" viewBox="0 0 87.300 78" ><path d="M6.600 66.850l3.850 6.650c.8 1.400 1.950 2.500 3.300 3.300L27.500 53H0c0 1.550.4 3.100 1.200 4.500z" fill="#0066da"/><path d="M43.650 25L29.900 1.200c-1.350.8-2.500 1.900-3.300 3.300L1.200 48.500A9.060 9.060 0 0 0 0 53h27.500z" fill="#00ac47"/><path d="M73.550 76.800c1.350-.8 2.500-1.900 3.300-3.300l1.600-2.750L86.100 57.500c.8-1.400 1.200-2.950 1.200-4.500H59.800l5.850 11.500z" fill="#ea4335"/><path d="M43.650 25L57.400 1.200C56.050.4 54.500 0 52.900 0H34.400c-1.600 0-3.150.45-4.500 1.200z" fill="#00832d"/><path d="M59.800 53H27.500L13.750 76.800c1.350.8 2.900 1.200 4.500 1.200h50.800c1.600 0 3.150-.45 4.500-1.200z" fill="#2684fc"/><path d="M73.400 26.500L60.700 4.500c-.8-1.400-1.950-2.500-3.300-3.300L43.650 25 59.800 53h27.450c0-1.550-.4-3.100-1.200-4.500z" fill="#ffba00"/></svg>
<svg class="abs" style="left:1234px;top:18px;width:36px;height:36px" viewBox="0 0 36 36" ><defs><linearGradient id="cv" x1="0" y1="0" x2="1" y2="1"><stop offset="0" stop-color="#00c9c9"/><stop offset=".45" stop-color="#1f9ed6"/><stop offset="1" stop-color="#8a22ea"/></linearGradient></defs><rect width="36" height="36" fill="url(#cv)"/><text x="18" y="28.500" text-anchor="middle" font-family="Liberation Serif,serif" font-style="italic" font-size="33" fill="#fff">C</text></svg>
<svg class="abs" style="left:1300.5px;top:17.5px;width:35px;height:35px" viewBox="0 0 35 35" ><defs><radialGradient id="ff1" cx=".7" cy=".2" r=".95"><stop offset="0" stop-color="#fff36a"/><stop offset=".3" stop-color="#ffbd2e"/><stop offset=".6" stop-color="#ff6a2a"/><stop offset="1" stop-color="#f0207a"/></radialGradient><radialGradient id="ff2" cx=".5" cy=".4" r=".6"><stop offset="0" stop-color="#9059ff"/><stop offset="1" stop-color="#5b2fc7"/></radialGradient></defs><path d="M19.500 0c3.500 2.500 6 5.500 7.500 8.500 1.500-.5 2.500-2 2.500-2C33 10 35 14.500 34.500 20 33.500 29 26.500 35 17.500 35 8 35 .5 27.500 .5 18.500c0-4 1.500-8 3.500-10.500 0 1.500.5 3 1 3.500C6 8 8 5.500 10.500 5c0 1 .5 2 1 2.500C13.500 4 16.500 1.500 19.500 0z" fill="url(#ff1)"/><circle cx="17.500" cy="18.500" r="8.200" fill="url(#ff2)"/><path d="M5.500 14c2-2.500 5.500-3 8-2 1.500 1 3 1 5 .5-1 2.500-3.500 3.500-6 3.500 1.500 5 7 7.500 12 5-2 4.500-7 7-12 5.500C7 24.500 4 19.500 5.500 14z" fill="#ff8a20"/><path d="M5.500 14c2-2.500 5.500-3 8-2 1.500 1 3 1 5 .5-1 2.500-3.500 3.500-6 3.500-2.500-1.500-5-2-7-2z" fill="#ffb52a"/></svg>
<svg class="abs" style="left:1366px;top:18px;width:36px;height:36px" viewBox="0 0 36 36" ><rect width="36" height="36" fill="#4a454b"/><path d="M9 12l6-2 2 6-6 2z" fill="#e8e8e8"/><path d="M11 13l3-1 1 3-3 1z" fill="#555"/><rect x="7.500" y="18.500" width="5.500" height="5" fill="#f08a1c"/><rect x="7.500" y="22" width="5.500" height="2.500" fill="#4a9f2e"/><rect x="13.500" y="16" width="6" height="7.500" fill="#3f8fd6"/><rect x="13.500" y="20.500" width="4" height="3" fill="#58a83a"/><circle cx="21" cy="15.500" r="3.500" fill="#5aa0d8"/><rect x="19" y="18.500" width="7" height="5" fill="#8fc1e8"/><path d="M21 13h6l1.500 5h-5z" fill="#f2c53a"/><path d="M24 18l4 1-1 5.500-2.500-1z" fill="#d9b24a"/></svg>
<div class="abs" style="left:1380px;top:60px;width:9px;height:5px;border-radius:2.500px;background:#858a8b"></div>
<svg class="abs" style="left:1508.5px;top:28.5px;width:19px;height:11px" viewBox="0 0 19 11" ><path d="M1 10L9.500 1.500 18 10" fill="none" stroke="#1b1b1b" stroke-width="1.600"/></svg>
<svg class="abs" style="left:1553px;top:26px;width:26px;height:22px" viewBox="0 0 26 22" ><defs><linearGradient id="od" x1="0" y1="0" x2="0" y2="1"><stop offset="0" stop-color="#6d6d6d"/><stop offset="1" stop-color="#d8d8d8"/></linearGradient></defs><path d="M6 16.500a4.800 4.800 0 0 1-.6-9.500A7 7 0 0 1 18.500 5.500a5.400 5.400 0 0 1 2.300 10.300z" fill="url(#od)" stroke="#1b1b1b" stroke-width="1.500"/><circle cx="18.200" cy="14.800" r="6.800" fill="#e81123"/><path d="M15.500 12.100l5.400 5.400M20.900 12.100l-5.400 5.400" stroke="#fff" stroke-width="1.700"/></svg>
<svg class="abs" style="left:1601.5px;top:22.5px;width:25px;height:25px" viewBox="0 0 25 25" ><path d="M2 11.500A10 10 0 0 1 21.500 7.500M23 13.500A10 10 0 0 1 3.500 18" fill="none" stroke="#1b1b1b" stroke-width="1.500"/><path d="M22.200 1.500v6.500h-6.500M2.500 24v-6.500H9" fill="none" stroke="#1b1b1b" stroke-width="1.500"/><circle cx="18.500" cy="18.500" r="6.200" fill="#0a74da"/></svg>
<svg class="abs" style="left:1650px;top:25px;width:24px;height:18px" viewBox="0 0 24 18" ><path d="M1 6.500a15.500 15.500 0 0 1 22 0M4.500 10a10.500 10.500 0 0 1 15 0M8 13.300a5.600 5.600 0 0 1 8 0" fill="none" stroke="#1b1b1b" stroke-width="1.700" stroke-linecap="round"/><circle cx="12" cy="16" r="1.700" fill="#1b1b1b"/></svg>
<svg class="abs" style="left:1686px;top:25.5px;width:25px;height:19px" viewBox="0 0 25 19" ><path d="M1 6.500h3.500L9.500 1.500v16L4.500 12.500H1z" fill="none" stroke="#1b1b1b" stroke-width="1.500" stroke-linejoin="round"/><path d="M12.500 6a5 5 0 0 1 0 7" fill="none" stroke="#1b1b1b" stroke-width="1.500" stroke-linecap="round"/><path d="M15.800 3.300a8.800 8.800 0 0 1 0 12.400" fill="none" stroke="#8f9494" stroke-width="1.400" stroke-linecap="round"/><path d="M19 .8a12.500 12.500 0 0 1 0 17.400" fill="none" stroke="#c0c6c6" stroke-width="1.400" stroke-linecap="round"/></svg>
<svg class="abs" style="left:1722px;top:24px;width:25px;height:19px" viewBox="0 0 25 19" ><rect x="7" y="5" width="14.500" height="12" rx="2" fill="none" stroke="#1b1b1b" stroke-width="1.600"/><path d="M22 8.500h1.600a1.200 1.200 0 0 1 1.200 1.200v2.600a1.200 1.200 0 0 1-1.200 1.200H22z" fill="#1b1b1b"/><rect x="9" y="10" width="5" height="5" fill="#1b1b1b"/><path d="M2.500 .5v4M6.500 .5v4" stroke="#1b1b1b" stroke-width="1.500"/><path d="M.8 4.500h7.400v2.500a3.700 3.700 0 0 1-7.400 0z" fill="#1b1b1b"/><path d="M4.500 10v8" stroke="#1b1b1b" stroke-width="1.500"/></svg>
<div class="t" style="left:1755px;width:100px;text-align:right;top:12.500px;font-size:17.400px;letter-spacing:-.6px">14:02</div>
<div class="t" style="left:1745px;width:110px;text-align:right;top:35.500px;font-size:17.400px;letter-spacing:-.1px">16/12/2022</div>
<div class="abs" style="left:1867px;top:23px;width:24px;height:24px;border-radius:50%;background:#00b4c0;color:#fff;font-size:15px;line-height:24px;text-align:center">3</div>
</div></div>
</body>
</html>
